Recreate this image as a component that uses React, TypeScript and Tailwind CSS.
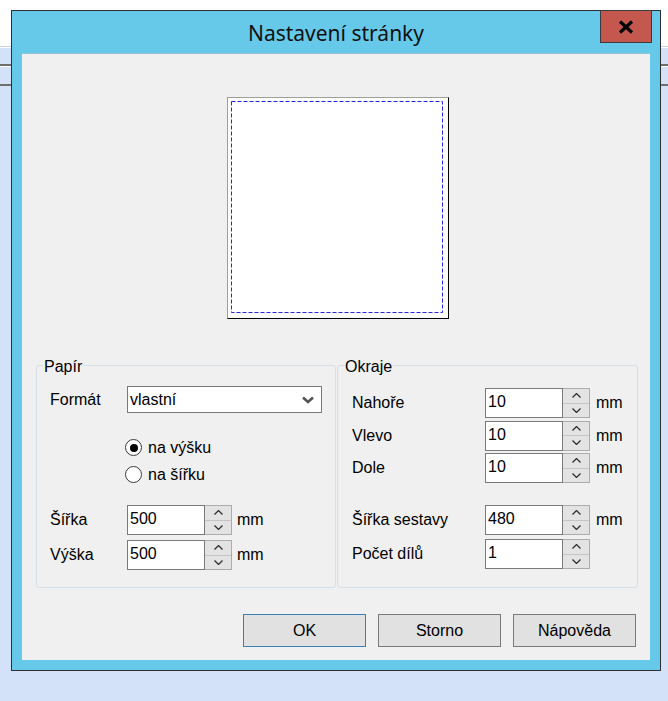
import React from 'react';

const font = { fontFamily: '"Liberation Sans", Arial, sans-serif' };

const Chevron = ({ up }: { up?: boolean }) => (
  <svg width="9" height="5" viewBox="0 0 9 5" className="block">
    <polyline
      points={up ? '0.5,4.5 4.5,0.5 8.5,4.5' : '0.5,0.5 4.5,4.5 8.5,0.5'}
      fill="none"
      stroke="#2a2a2a"
      strokeWidth="1.2"
    />
  </svg>
);

const SpinBox = ({ value }: { value: string }) => (
  <div className="flex h-[30px] w-[105px]">
    <div className="flex flex-1 items-center border border-[#7a7a7a] bg-white pb-[2px] pl-[2px] text-[16px] text-black">
      {value}
    </div>
    <div className="flex w-[27px] flex-col border border-l-0 border-[#acacac] bg-[#e3e3e3]">
      <div className="flex flex-1 items-center justify-center border-b border-[#c4c4c4]">
        <Chevron up />
      </div>
      <div className="flex flex-1 items-center justify-center">
        <Chevron />
      </div>
    </div>
  </div>
);

const Radio = ({ label, checked }: { label: string; checked?: boolean }) => (
  <div className="flex h-[17px] items-center gap-[6px]">
    <span className="flex h-[17px] w-[17px] items-center justify-center rounded-full border border-[#3a3a3a] bg-white">
      {checked && <span className="h-[8px] w-[8px] rounded-full bg-black" />}
    </span>
    <span className="text-[16px] text-black">{label}</span>
  </div>
);

const GroupBox = ({
  title,
  className,
  children,
}: {
  title: string;
  className: string;
  children: React.ReactNode;
}) => (
  <div className={`relative h-[223px] rounded-[3px] border border-[#d5dfe5] ${className}`}>
    <span className="absolute -top-[8px] left-[6px] bg-[#f0f0f0] px-[1px] text-[16px] leading-[18px] text-black">
      {title}
    </span>
    {children}
  </div>
);

const Button = ({ label, primary }: { label: string; primary?: boolean }) => (
  <button
    type="button"
    className={`h-[33px] w-[123px] border bg-[#e1e1e1] text-[16px] text-black ${
      primary ? 'border-[#3c7fb1]' : 'border-[#7a7a7a]'
    }`}
  >
    {label}
  </button>
);

const App = () => {
  const margins = [
    { label: 'Nahoře', value: '10' },
    { label: 'Vlevo', value: '10' },
    { label: 'Dole', value: '10' },
  ];

  return (
    <div className="relative h-[701px] w-[668px] overflow-hidden bg-[#d3e2f8]" style={font}>
      {/* window behind the dialog */}
      <div className="h-[46px] bg-white" />
      <div className="h-px bg-[#c3d5f1]" />
      <div className="h-px bg-white" />
      <div className="h-[16px]" />
      <div className="h-[2px] bg-[#6e6e6e]" />
      <div className="h-px bg-white" />
      <div className="h-[17px]" />
      <div className="h-[2px] bg-[#6e6e6e]" />

      {/* dialog */}
      <div className="absolute left-[11px] top-[10px] flex h-[661px] w-[650px] flex-col border border-[#2e2e2e] bg-[#66c9ea]">
        <div
          className="flex h-[42px] shrink-0 items-center justify-center pt-[3px] text-[21px] text-[#111]"
          style={{ fontFamily: '"Noto Sans", "Open Sans", sans-serif' }}
        >
          Nastavení stránky
        </div>
        <button
          type="button"
          className="absolute -top-px right-[8px] flex h-[33px] w-[52px] items-center justify-center border border-[#3b3b3b] bg-[#c4584f]"
        >
          <svg width="16" height="14" viewBox="0 0 16 14">
            <path d="M2 1.5 L14 12.5 M14 1.5 L2 12.5" stroke="#000" strokeWidth="3.2" />
          </svg>
        </button>

        <div className="mx-[10px] mb-[10px] flex flex-1 flex-col border-t border-[#95bfd4] bg-[#f0f0f0]">
          {/* page preview */}
          <div className="ml-[205px] mt-[43px] h-[222px] w-[222px] border border-b-black border-l-[#a0a0a0] border-r-black border-t-[#a0a0a0] bg-white">
            <svg width="220" height="220" className="block">
              <rect
                x="3.5"
                y="3.5"
                width="211"
                height="211"
                fill="none"
                stroke="#2424f0"
                strokeWidth="1"
                strokeDasharray="4 2"
              />
            </svg>
          </div>

          <div className="ml-[14px] mt-[46px] flex">
            <GroupBox title="Papír" className="w-[300px] pl-[13px] pt-[20px]">
              <div className="flex h-[27px] items-center">
                <span className="w-[77px] text-[16px]">Formát</span>
                <div className="flex h-[27px] w-[195px] items-center justify-between border border-[#7a7a7a] bg-white pl-[2px] pr-[7px] text-[16px]">
                  <span>vlastní</span>
                  <svg width="12" height="8" viewBox="0 0 12 8">
                    <polyline points="1,1.5 6,6 11,1.5" fill="none" stroke="#555" strokeWidth="2.6" />
                  </svg>
                </div>
              </div>
              <div className="ml-[75px] mt-[26px] flex flex-col gap-[10px]">
                <Radio label="na výšku" checked />
                <Radio label="na šířku" />
              </div>
              <div className="mt-[22px] flex flex-col gap-[5px]">
                {[
                  { label: 'Šířka', value: '500' },
                  { label: 'Výška', value: '500' },
                ].map((row) => (
                  <div key={row.label} className="flex items-center">
                    <span className="w-[77px] text-[16px]">{row.label}</span>
                    <SpinBox value={row.value} />
                    <span className="ml-[5px] text-[16px]">mm</span>
                  </div>
                ))}
              </div>
            </GroupBox>

            <GroupBox title="Okraje" className="ml-px w-[301px] pl-[14px] pt-[22px]">
              <div className="flex flex-col gap-[2.5px]">
                {margins.map((row) => (
                  <div key={row.label} className="flex items-center">
                    <span className="w-[133px] text-[16px]">{row.label}</span>
                    <SpinBox value={row.value} />
                    <span className="ml-[6px] text-[16px]">mm</span>
                  </div>
                ))}
              </div>
              <div className="mt-[22px] flex flex-col gap-[4px]">
                <div className="flex items-center">
                  <span className="w-[133px] text-[16px]">Šířka sestavy</span>
                  <SpinBox value="480" />
                  <span className="ml-[6px] text-[16px]">mm</span>
                </div>
                <div className="flex items-center">
                  <span className="w-[133px] text-[16px]">Počet dílů</span>
                  <SpinBox value="1" />
                </div>
              </div>
            </GroupBox>
          </div>

          <div className="mt-[26px] flex justify-end gap-[12px] pr-[14px]">
            <Button label="OK" primary />
            <Button label="Storno" />
            <Button label="Nápověda" />
          </div>
        </div>
      </div>
    </div>
  );
};

export default App;
